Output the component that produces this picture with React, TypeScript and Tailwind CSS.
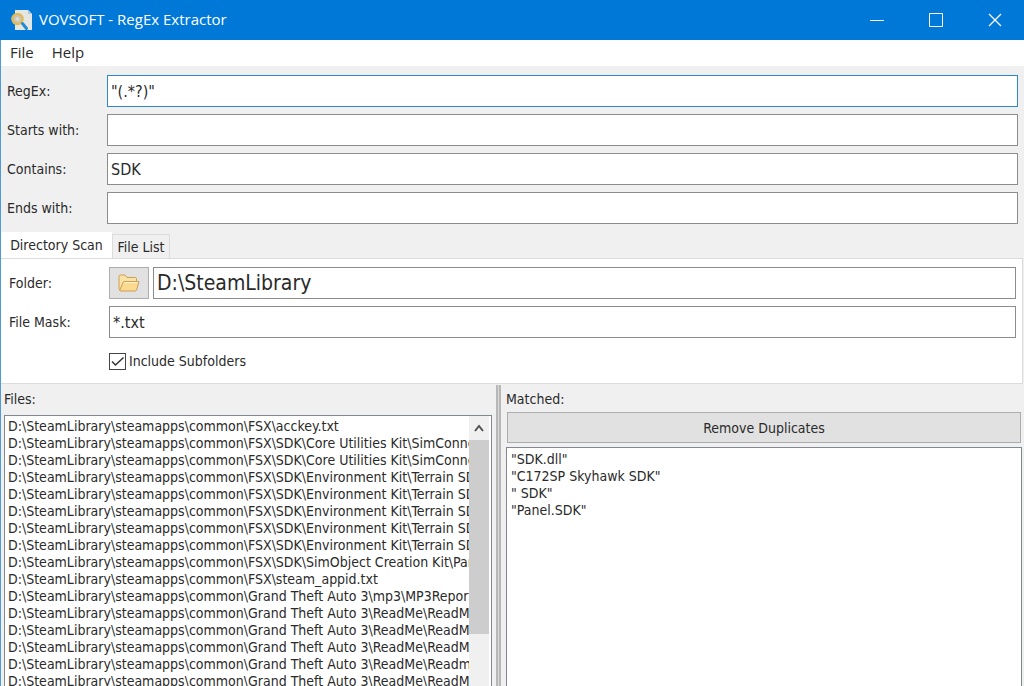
import {useState} from "react";
import type {ReactNode} from "react";

const files = [
    "FSX\\acckey.txt",
    "FSX\\SDK\\Core Utilities Kit\\SimConnect SDK",
    "FSX\\SDK\\Core Utilities Kit\\SimConnect SDK",
    "FSX\\SDK\\Environment Kit\\Terrain SDK",
    "FSX\\SDK\\Environment Kit\\Terrain SDK",
    "FSX\\SDK\\Environment Kit\\Terrain SDK",
    "FSX\\SDK\\Environment Kit\\Terrain SDK",
    "FSX\\SDK\\Environment Kit\\Terrain SDK",
    "FSX\\SDK\\SimObject Creation Kit\\Panels",
    "FSX\\steam_appid.txt",
    "Grand Theft Auto 3\\mp3\\MP3Report.txt",
    "Grand Theft Auto 3\\ReadMe\\ReadMe.txt",
    "Grand Theft Auto 3\\ReadMe\\ReadMe.txt",
    "Grand Theft Auto 3\\ReadMe\\ReadMe.txt",
    "Grand Theft Auto 3\\ReadMe\\Readme.txt",
    "Grand Theft Auto 3\\ReadMe\\ReadMe.txt",
];

const matches = ["\"SDK.dll\"", "\"C172SP Skyhawk SDK\"", "\" SDK\"", "\"Panel.SDK\""];

const AppIcon = () => (
    <svg width="22" height="22" viewBox="0 0 22 22" aria-hidden="true">
        <path d="M4 1h13l4 4v16H4z" fill="#e4e6e3"/>
        <path d="M17 1v4h4z" fill="#b8c9d6"/>
        <circle cx="6.500" cy="10" r="5" fill="#c9c5b8" stroke="#e0bb5a" strokeWidth="2.500"/>
        <circle cx="6.500" cy="10" r="2" fill="#dcd9d0"/>
        <path d="M11.500 14.500l4 5" stroke="#2589d0" strokeWidth="3" strokeLinecap="round"/>
    </svg>
);

const FolderIcon = () => (
    <svg width="22" height="18" viewBox="0 0 22 18" aria-hidden="true">
        <path d="M1 15V2.500Q1 1 2.500 1H7l2 2.500h8.500q1 0 1 1V8L18 16H2z" fill="#f8e2a6" stroke="#cf9f55"/>
        <path d="M6 7.500h15L18.500 16q-.3 1-1.500 1H2.500q-1 0-.7-1L5 8.500q.3-1 1-1z" fill="#fbd98f" stroke="#cf9f55" strokeLinejoin="round"/>
        <path d="M6.500 8.500h13" stroke="#fff3cf"/>
    </svg>
);

type RowProps = {
    id: string;
    label: string;
    value?: string;
    big?: boolean;
    accent?: boolean;
    children?: ReactNode;
};

const FieldRow = ({id, label, value = "", big, accent, children}: RowProps) => (
    <div className="flex h-8 items-center">
        <label htmlFor={id} className="w-[100px] shrink-0">{label}</label>
        {children}
        <input
            id={id}
            type="text"
            defaultValue={value}
            className={`h-8 min-w-0 flex-1 border bg-white px-[3px] outline-none ${big ? "text-[21px]" : "text-base"} ${accent ? "border-[#2f86cf]" : "border-[#8c8c8c]"}`}
        />
    </div>
);

const App = () => {
    const [recursive, setRecursive] = useState(true);

    return (
        <div className="flex h-screen flex-col overflow-hidden bg-[#f0f0f0] font-['DejaVu_Sans_Condensed','DejaVu_Sans',sans-serif] text-sm text-[#2a2a2a]">
            <header className="flex h-10 shrink-0 items-center bg-[#0078d7] pl-[11px] text-white">
                <AppIcon/>
                <h1 className="ml-1.5 flex-1 font-['Open_Sans',sans-serif] text-[15px]">VOVSOFT - RegEx Extractor</h1>
                <button aria-label="Minimize" className="flex h-10 w-[59px] items-center justify-center">
                    <svg width="14" height="14" viewBox="0 0 14 14" fill="none" stroke="currentColor"><path d="M0 7.500h14"/></svg>
                </button>
                <button aria-label="Maximize" className="flex h-10 w-[59px] items-center justify-center">
                    <svg width="14" height="14" viewBox="0 0 14 14" fill="none" stroke="currentColor"><path d="M.5.5h13v13H.5z"/></svg>
                </button>
                <button aria-label="Close" className="flex h-10 w-[59px] items-center justify-center">
                    <svg width="14" height="14" viewBox="0 0 14 14" fill="none" stroke="currentColor" strokeWidth="1.300"><path d="M1 1l12 12M13 1L1 13"/></svg>
                </button>
            </header>

            <div className="flex min-h-0 flex-1 flex-col border-l border-[#4f9bd9]">
                <nav className="flex h-[26px] shrink-0 items-center gap-[18px] bg-white pl-[9px] font-['Open_Sans',sans-serif] text-[15px]">
                    <button>File</button>
                    <button>Help</button>
                </nav>

                <div className="flex shrink-0 flex-col gap-[7px] pt-[9px] pr-1.5 pl-1.5">
                    <FieldRow id="regex" label="RegEx:" value={"\"(.*?)\""} accent/>
                    <FieldRow id="starts" label="Starts with:"/>
                    <FieldRow id="contains" label="Contains:" value="SDK"/>
                    <FieldRow id="ends" label="Ends with:"/>
                </div>

                <div role="tablist" className="mt-2 flex h-[26px] shrink-0 items-end">
                    <button role="tab" aria-selected="true" className="h-[26px] w-[111px] bg-white">Directory Scan</button>
                    <button role="tab" aria-selected="false" className="h-6 w-[58px] border border-b-0 border-[#dcdcdc]">File List</button>
                </div>

                <section className="mr-px flex shrink-0 flex-col gap-[7px] border border-l-0 border-[#dcdcdc] bg-white pt-2 pr-1.5 pb-1.5 pl-2">
                    <FieldRow id="folder" label="Folder:" value="D:\SteamLibrary" big>
                        <button aria-label="Browse folder" className="mr-1 flex h-8 w-10 shrink-0 items-center justify-center border border-[#adadad] bg-[#e1e1e1]">
                            <FolderIcon/>
                        </button>
                    </FieldRow>
                    <FieldRow id="mask" label="File Mask:" value="*.txt"/>
                    <label className="ml-[100px] flex h-8 items-center gap-[3px]">
                        <span className="relative flex size-[17px]">
                            <input
                                type="checkbox"
                                checked={recursive}
                                onChange={(e) => setRecursive(e.target.checked)}
                                className="peer size-[17px] appearance-none border border-[#444] bg-white"
                            />
                            <svg viewBox="0 0 17 17" className="pointer-events-none absolute inset-0 hidden peer-checked:block" fill="none" stroke="#333" strokeWidth="1.500">
                                <path d="M3 8.500l3.500 3.500L14.500 4.500"/>
                            </svg>
                        </span>
                        Include Subfolders
                    </label>
                </section>

                <main className="flex min-h-0 flex-1 pt-px">
                    <section className="flex min-h-0 w-[495px] shrink-0 flex-col pr-1 pl-[3px]">
                        <h2 className="flex h-[30px] shrink-0 items-center pb-0.5">Files:</h2>
                        <div className="flex min-h-0 flex-1 border border-b-0 border-[#828790] bg-white pr-0.5">
                            <ul className="min-w-0 flex-1 overflow-hidden pt-0.5 pl-[3px] leading-[17px] whitespace-nowrap">
                                {files.map((file, i) => <li key={i}>{"D:\\SteamLibrary\\steamapps\\common\\" + file}</li>)}
                            </ul>
                            <div className="flex w-5 shrink-0 flex-col bg-[#f0f0f0]">
                                <button aria-label="Scroll up" className="flex h-6 shrink-0 items-center justify-center">
                                    <svg width="10" height="8" viewBox="0 0 10 8" fill="none" stroke="#505050" strokeWidth="2"><path d="M1 7l4-5 4 5"/></svg>
                                </button>
                                <div className="h-[194px] bg-[#cdcdcd]"/>
                            </div>
                        </div>
                    </section>
                    <div className="w-[5px] shrink-0 border-x-2 border-[#b8b8b8] bg-[#d8d8d8]"/>
                    <section className="flex min-h-0 min-w-0 flex-1 flex-col pr-0.5 pl-[5px]">
                        <h2 className="flex h-[27px] shrink-0 items-center">Matched:</h2>
                        <button className="mx-px h-[31px] shrink-0 border border-[#adadad] bg-[#e1e1e1]">Remove Duplicates</button>
                        <ul className="mt-1 min-h-0 flex-1 overflow-hidden border border-b-0 border-[#828790] bg-white pt-[3px] pl-1 leading-[17px] whitespace-pre">
                            {matches.map((match) => <li key={match}>{match}</li>)}
                        </ul>
                    </section>
                </main>
            </div>
        </div>
    );
};

export default App;
